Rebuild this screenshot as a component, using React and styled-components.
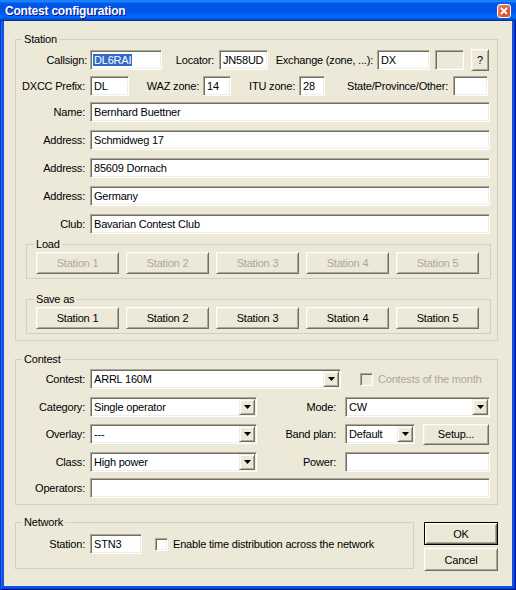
import styled, { createGlobalStyle } from "styled-components";

const GlobalStyle = createGlobalStyle`
    body {
        margin: 0;
        font-family: "Liberation Sans", Arial, sans-serif;
        font-size: 11px;
        letter-spacing: -0.2px;
        color: #000;
    }
`;

const Window = styled.div`
    width: 516px;
    height: 590px;
    box-sizing: border-box;
    display: flex;
    flex-direction: column;
    background: #0a54e6;
    box-shadow: inset 1px 0 #0831d9, inset -1px -1px #00138c, inset 2px 0 #166aee, inset -2px -2px #003bda;
`;

const TitleBar = styled.div`
    height: 21px;
    flex-shrink: 0;
    display: flex;
    align-items: center;
    justify-content: space-between;
    padding: 0 5px 0 5px;
    background: linear-gradient(
        to bottom,
        #0058ee 0%,
        #3593ff 4%,
        #288eff 6%,
        #127dff 8%,
        #036ffc 10%,
        #0262ee 14%,
        #0057e5 20%,
        #0054e3 24%,
        #0055eb 56%,
        #005bf5 66%,
        #026afe 76%,
        #0062ef 86%,
        #0052d6 92%,
        #0040ab 94%,
        #003092 100%
    );
`;

const Title = styled.span`
    color: #fff;
    font-weight: 700;
    font-size: 12px;
    letter-spacing: -0.2px;
    text-shadow: 1px 1px #0f1089;
`;

const CloseButton = styled.div`
    width: 14px;
    height: 14px;
    box-sizing: border-box;
    border: 1px solid #fff;
    border-radius: 3px;
    background: radial-gradient(circle at 70% 70%, #cc4628 0%, #e26a4b 60%, #f09a83 100%);
    display: flex;
    align-items: center;
    justify-content: center;
`;

const Body = styled.div`
    flex: 1;
    margin: 0 4px 4px 4px;
    padding: 12px 14px 0 11px;
    background: #ece9d8;
    display: flex;
    flex-direction: column;
`;

const GroupBox = styled.fieldset`
    margin: ${(p) => p.$mt || 0}px ${(p) => p.$mr || 0}px 0 ${(p) => p.$ml || 0}px;
    padding: ${(p) => p.$pad};
    border: 1px solid #d0d0bf;
    min-width: 0;
    width: ${(p) => (p.$w ? `${p.$w}px` : "auto")};
    box-sizing: border-box;
    flex-shrink: 0;
`;

const Legend = styled.legend`
    padding: 0 2px;
    margin-left: ${(p) => p.$ml || 0}px;
    font-size: 11px;
    line-height: 13px;
`;

const Row = styled.div`
    display: flex;
    align-items: center;
    height: ${(p) => p.$h || 20}px;
    margin-top: ${(p) => p.$mt || 0}px;
`;

const Label = styled.span`
    width: ${(p) => p.$w || 68}px;
    flex-shrink: 0;
    box-sizing: border-box;
    padding-right: ${(p) => p.$pr ?? 5}px;
    text-align: right;
    white-space: nowrap;
`;

const Field = styled.div`
    width: ${(p) => (p.$w ? `${p.$w}px` : "auto")};
    flex: ${(p) => (p.$w ? "none" : 1)};
    margin-left: ${(p) => p.$ml || 0}px;
    height: 20px;
    box-sizing: border-box;
    background: ${(p) => (p.$disabled ? "#ece9d8" : "#fff")};
    border: 1px solid;
    border-color: #aca899 #fff #fff #aca899;
    box-shadow: inset 1px 1px #716f64, inset -1px -1px #f1efe2;
    padding: 0 1px 0 3px;
    display: flex;
    align-items: center;
    overflow: hidden;
    white-space: nowrap;
`;

const Selected = styled.span`
    background: #316ac5;
    color: #fff;
    margin-left: -1px;
    padding: 0 1px;
`;

const ComboValue = styled.span`
    flex: 1;
    overflow: hidden;
`;

const DropButton = styled.div`
    width: 16px;
    height: 16px;
    flex-shrink: 0;
    box-sizing: border-box;
    background: #ece9d8;
    border: 1px solid;
    border-color: #f1efe2 #716f64 #716f64 #f1efe2;
    box-shadow: inset 1px 1px #fff, inset -1px -1px #aca899;
    display: flex;
    align-items: center;
    justify-content: center;
`;

const Button = styled.button`
    width: ${(p) => p.$w}px;
    height: ${(p) => p.$h || 22}px;
    margin-left: ${(p) => p.$ml || 0}px;
    flex-shrink: 0;
    padding: 0;
    box-sizing: border-box;
    font-family: inherit;
    font-size: 11px;
    letter-spacing: inherit;
    color: ${(p) => (p.disabled ? "#aca899" : "#000")};
    background: #ece9d8;
    border: 1px solid;
    border-color: ${(p) => (p.$default ? "#000" : "#fff #716f64 #716f64 #fff")};
    box-shadow: ${(p) =>
        p.$default
            ? "inset 1px 1px #fff, inset -1px -1px #716f64, inset 2px 2px #f1efe2, inset -2px -2px #aca899"
            : "inset 1px 1px #f1efe2, inset -1px -1px #aca899"};
`;

const ButtonRow = styled.div`
    display: flex;
    gap: 7px;
`;

const Check = styled.span`
    width: 13px;
    height: 13px;
    flex-shrink: 0;
    box-sizing: border-box;
    margin-left: ${(p) => p.$ml || 0}px;
    background: ${(p) => (p.$disabled ? "#ece9d8" : "#fff")};
    border: 1px solid;
    border-color: #aca899 #fff #fff #aca899;
    box-shadow: inset 1px 1px #716f64, inset -1px -1px #f1efe2;
`;

const CheckText = styled.span`
    margin-left: 5px;
    white-space: nowrap;
    color: ${(p) => (p.$disabled ? "#aca899" : "#000")};
`;

const BottomRow = styled.div`
    display: flex;
    align-items: flex-start;
    margin-top: 11px;
`;

const DialogButtons = styled.div`
    display: flex;
    flex-direction: column;
    gap: 3px;
    margin: 6px 0 0 10px;
`;

const Arrow = () => (
    <svg width="7" height="4" viewBox="0 0 7 4">
        <polygon points="0,0 7,0 3.5,4" fill="#000" />
    </svg>
);

const Combo = ({ w, value }) => (
    <Field $w={w} style={{ paddingRight: 1 }}>
        <ComboValue>{value}</ComboValue>
        <DropButton>
            <Arrow />
        </DropButton>
    </Field>
);

const stations = ["Station 1", "Station 2", "Station 3", "Station 4", "Station 5"];

export default function App() {
    return (
        <Window>
            <GlobalStyle />
            <TitleBar>
                <Title>Contest configuration</Title>
                <CloseButton>
                    <svg width="8" height="8" viewBox="0 0 8 8">
                        <path d="M1 1 L7 7 M7 1 L1 7" stroke="#fff" strokeWidth="1.8" />
                    </svg>
                </CloseButton>
            </TitleBar>
            <Body>
                <GroupBox $pad="3px 7px 6px 6px">
                    <Legend>Station</Legend>
                    <Row $h={22}>
                        <Label $pr={3}>Callsign:</Label>
                        <Field $w={72}>
                            <Selected>DL6RAI</Selected>
                        </Field>
                        <Label $w={57}>Locator:</Label>
                        <Field $w={49}>JN58UD</Field>
                        <Label $w={109} $pr={4}>
                            Exchange (zone, ...):
                        </Label>
                        <Field $w={53}>DX</Field>
                        <Field $w={29} $ml={5} $disabled />
                        <Button $w={18} $h={22} $ml={7}>
                            ?
                        </Button>
                    </Row>
                    <Row $mt={5}>
                        <Label>DXCC Prefix:</Label>
                        <Field $w={39}>DL</Field>
                        <Label $w={74} $pr={4}>
                            WAZ zone:
                        </Label>
                        <Field $w={28}>14</Field>
                        <Label $w={68} $pr={4}>
                            ITU zone:
                        </Label>
                        <Field $w={26}>28</Field>
                        <Label $w={128}>State/Province/Other:</Label>
                        <Field $w={35} />
                    </Row>
                    <Row $mt={6}>
                        <Label>Name:</Label>
                        <Field>Bernhard Buettner</Field>
                    </Row>
                    <Row $mt={8}>
                        <Label>Address:</Label>
                        <Field>Schmidweg 17</Field>
                    </Row>
                    <Row $mt={8}>
                        <Label>Address:</Label>
                        <Field>85609 Dornach</Field>
                    </Row>
                    <Row $mt={8}>
                        <Label>Address:</Label>
                        <Field>Germany</Field>
                    </Row>
                    <Row $mt={8}>
                        <Label>Club:</Label>
                        <Field>Bavarian Contest Club</Field>
                    </Row>

                    <GroupBox $mt={4} $ml={4} $mr={-1} $pad="1px 10px 4px 9px">
                        <Legend $ml={-2}>Load</Legend>
                        <ButtonRow>
                            {stations.map((s) => (
                                <Button key={s} $w={83} disabled>
                                    {s}
                                </Button>
                            ))}
                        </ButtonRow>
                    </GroupBox>

                    <GroupBox $mt={14} $ml={4} $mr={-1} $pad="1px 10px 4px 9px">
                        <Legend $ml={-2}>Save as</Legend>
                        <ButtonRow>
                            {stations.map((s) => (
                                <Button key={s} $w={83}>
                                    {s}
                                </Button>
                            ))}
                        </ButtonRow>
                    </GroupBox>
                </GroupBox>

                <GroupBox $mt={12} $pad="3px 7px 6px 6px">
                    <Legend>Contest</Legend>
                    <Row>
                        <Label>Contest:</Label>
                        <Combo w={251} value="ARRL 160M" />
                        <Check $ml={19} $disabled />
                        <CheckText $disabled>Contests of the month</CheckText>
                    </Row>
                    <Row $mt={8}>
                        <Label>Category:</Label>
                        <Combo w={167} value="Single operator" />
                        <Label $w={88} $pr={9}>
                            Mode:
                        </Label>
                        <Combo value="CW" />
                    </Row>
                    <Row $mt={7}>
                        <Label>Overlay:</Label>
                        <Combo w={167} value="---" />
                        <Label $w={88} $pr={9}>
                            Band plan:
                        </Label>
                        <Combo w={70} value="Default" />
                        <Button $w={66} $h={21} $ml={8}>
                            Setup...
                        </Button>
                    </Row>
                    <Row $mt={8}>
                        <Label>Class:</Label>
                        <Combo w={167} value="High power" />
                        <Label $w={88} $pr={9}>
                            Power:
                        </Label>
                        <Field />
                    </Row>
                    <Row $mt={6}>
                        <Label>Operators:</Label>
                        <Field />
                    </Row>
                </GroupBox>

                <BottomRow>
                    <GroupBox $w={399} $pad="5px 7px 14px 6px">
                        <Legend>Network</Legend>
                        <Row>
                            <Label>Station:</Label>
                            <Field $w={52}>STN3</Field>
                            <Check $ml={13} />
                            <CheckText>Enable time distribution across the network</CheckText>
                        </Row>
                    </GroupBox>
                    <DialogButtons>
                        <Button $w={74} $h={23} $default>
                            OK
                        </Button>
                        <Button $w={74} $h={23}>
                            Cancel
                        </Button>
                    </DialogButtons>
                </BottomRow>
            </Body>
        </Window>
    );
}
